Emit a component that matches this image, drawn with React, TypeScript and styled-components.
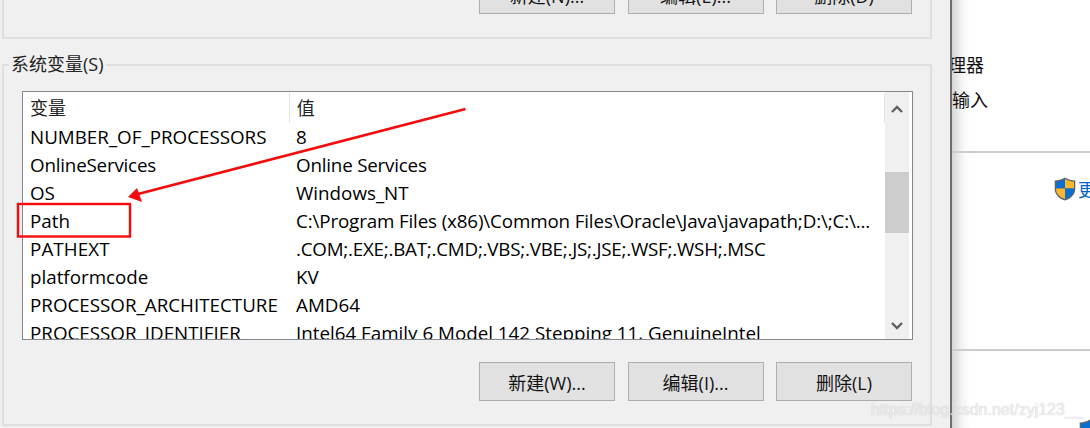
import { FC } from 'react';
import styled, { createGlobalStyle } from 'styled-components';

const GlobalStyle = createGlobalStyle`
  html, body {
    margin: 0;
    width: 1090px;
    height: 428px;
    overflow: hidden;
    background: #fff;
    font-family: "Open Sans", "Noto Sans CJK SC", sans-serif;
    font-size: 18.8px;
    color: #000;
  }
`;

const Screen = styled.div`
  position: relative;
  display: flex;
  width: 1090px;
  height: 428px;
  overflow: hidden;
`;

const Dialog = styled.div`
  width: 952px;
  flex: none;
  box-sizing: border-box;
  height: 428px;
  background: #f0f0f0;
  border-right: 2px solid #6f6f6f;
  padding-left: 2px;
`;

const GroupTop = styled.div`
  display: flow-root;
  width: 930px;
  height: 39px;
  box-sizing: border-box;
  border: 2px solid #dfdfdf;
  border-top: none;
  padding-right: 18px;
`;

const GroupBottom = styled.div`
  width: 930px;
  height: 362px;
  margin-top: 25px;
  box-sizing: border-box;
  border: 2px solid #dfdfdf;
  padding: 0 18px;
`;

const GroupTitle = styled.div`
  width: max-content;
  height: 26px;
  margin: -15px 0 0 -13px;
  padding: 0 2px;
  background: #f0f0f0;
  font-size: 18px;
  line-height: 26px;
  color: #222;
`;

const ButtonRow = styled.div<{ $top?: boolean }>`
  display: flex;
  justify-content: flex-end;
  gap: 12.5px;
  margin-top: ${({ $top }) => ($top ? '-25px' : '22px')};
`;

const Button = styled.div`
  width: 136px;
  height: 39px;
  box-sizing: border-box;
  display: flex;
  align-items: center;
  justify-content: center;
  background: #e1e1e1;
  border: 1px solid #adadad;
  font-size: 18px;
  color: #111;
`;

const ListView = styled.div`
  display: flex;
  width: 891px;
  height: 249px;
  margin-top: 14px;
  box-sizing: border-box;
  background: #fff;
  border: 1px solid #828790;
  overflow: hidden;
`;

const ListBody = styled.div`
  flex: 1;
  min-width: 0;
`;

const HeaderRow = styled.div`
  display: flex;
  height: 31px;
  align-items: center;
`;

const HeaderCell = styled.div<{ $first?: boolean }>`
  box-sizing: border-box;
  width: ${({ $first }) => ($first ? '267px' : '596px')};
  height: 30px;
  line-height: 30px;
  padding-left: 7px;
  border-right: 1px solid #e5e5e5;
  font-size: 18px;
  color: #222;
`;

const Row = styled.div`
  display: flex;
  height: 28px;
  line-height: 28px;
`;

const NameCell = styled.div<{ $spacing: number }>`
  width: 267px;
  flex: none;
  box-sizing: border-box;
  padding-left: 7px;
  white-space: nowrap;
  letter-spacing: ${({ $spacing }) => $spacing}px;
`;

const ValueCell = styled.div<{ $spacing: number }>`
  width: 590px;
  flex: none;
  box-sizing: border-box;
  padding-left: 6px;
  white-space: nowrap;
  letter-spacing: ${({ $spacing }) => $spacing}px;
`;

const ScrollTrack = styled.div`
  width: 24px;
  flex: none;
  margin-right: 3px;
  display: flex;
  flex-direction: column;
  background: #f0f0f0;
`;

const ScrollArrow = styled.div<{ $down?: boolean }>`
  height: 31px;
  box-sizing: border-box;
  flex: none;
  display: flex;
  align-items: center;
  justify-content: center;
  padding-top: ${({ $down }) => ($down ? '5px' : '2px')};
`;

const ScrollGap = styled.div<{ $size: number }>`
  height: ${({ $size }) => $size}px;
  flex: none;
`;

const ScrollThumb = styled.div`
  height: 61px;
  flex: none;
  background: #cdcdcd;
`;

const RightPanel = styled.div`
  flex: 1;
  min-width: 0;
  overflow: hidden;
  background: linear-gradient(to right, #d6d6d6 0, #f4f4f4 10px, #fff 18px);
`;

const PanelSection = styled.div<{ $height: number }>`
  display: flow-root;
  height: ${({ $height }) => $height}px;
  box-sizing: border-box;
  border-bottom: 2px solid #cccccc;
`;

const PanelText = styled.div<{ $shift: number; $top: number }>`
  margin-top: ${({ $top }) => $top}px;
  margin-left: ${({ $shift }) => $shift}px;
  height: 26px;
  line-height: 26px;
  font-size: 18px;
  white-space: nowrap;
  color: #111;
`;

const SecurityRow = styled.div<{ $top: number; $left: number }>`
  display: flex;
  align-items: center;
  gap: 2px;
  padding-top: ${({ $top }) => $top}px;
  padding-left: ${({ $left }) => $left}px;
  width: 260px;
  font-size: 18px;
  color: #0066cc;
  white-space: nowrap;
`;

const ArrowOverlay = styled.svg`
  position: absolute;
  left: 0;
  top: 0;
  pointer-events: none;
`;

const Watermark = styled.div`
  position: absolute;
  left: 871px;
  top: 398px;
  font-family: "Liberation Sans", sans-serif;
  font-size: 16px;
  line-height: 24px;
  color: rgba(255, 255, 255, 0.75);
  text-shadow: 0 0 1px rgba(120, 120, 120, 0.55);
  white-space: nowrap;
`;

interface IVariable {
  name: string,
  value: string,
  nameSpacing?: number,
  valueSpacing?: number,
}

const rows: IVariable[] = [
  { name: 'NUMBER_OF_PROCESSORS', value: '8' },
  { name: 'OnlineServices', value: 'Online Services', nameSpacing: -0.2, valueSpacing: -0.2 },
  { name: 'OS', value: 'Windows_NT' },
  { name: 'Path', value: 'C:\\Program Files (x86)\\Common Files\\Oracle\\Java\\javapath;D:\\;C:\\...', valueSpacing: -0.14 },
  { name: 'PATHEXT', value: '.COM;.EXE;.BAT;.CMD;.VBS;.VBE;.JS;.JSE;.WSF;.WSH;.MSC', nameSpacing: 0.1, valueSpacing: -0.23 },
  { name: 'platformcode', value: 'KV' },
  { name: 'PROCESSOR_ARCHITECTURE', value: 'AMD64' },
  { name: 'PROCESSOR_IDENTIFIER', value: 'Intel64 Family 6 Model 142 Stepping 11, GenuineIntel' },
];

const Chevron: FC<{ down?: boolean }> = ({ down }) => (
  <svg width="12" height="10" viewBox="0 0 12 10">
    <path
      d={down ? 'M1 2 L6 7 L11 2' : 'M1 8 L6 3 L11 8'}
      fill="none"
      stroke="#606060"
      strokeWidth="2.4"
    />
  </svg>
);

const Shield: FC = () => (
  <svg width="22" height="24" viewBox="0 0 22 24" style={{ flex: 'none' }}>
    <path d="M11 0.5 C8 2.5 4 3.4 0.7 3.6 V12 C0.7 17.5 5 21.5 11 23.5 C17 21.5 21.3 17.5 21.3 12 V3.6 C18 3.4 14 2.5 11 0.5 Z" fill="#5f6468" />
    <path d="M11 2 C8.5 3.6 5 4.5 2 4.7 V11.5 H11 Z" fill="#0a6fd0" />
    <path d="M11 2 C13.5 3.6 17 4.5 20 4.7 V11.5 H11 Z" fill="#fbb62e" />
    <path d="M2 11.5 H11 V22 C6 20.2 2 17 2 12 Z" fill="#fbb62e" />
    <path d="M20 11.5 H11 V22 C16 20.2 20 17 20 12 Z" fill="#0a6fd0" />
  </svg>
);

const App: FC = () => (
  <>
    <GlobalStyle />
    <Screen>
      <Dialog>
        <GroupTop>
          <ButtonRow $top>
            <Button>新建(N)...</Button>
            <Button>编辑(E)...</Button>
            <Button>删除(D)</Button>
          </ButtonRow>
        </GroupTop>
        <GroupBottom>
          <GroupTitle>系统变量(S)</GroupTitle>
          <ListView>
            <ListBody>
              <HeaderRow>
                <HeaderCell $first>变量</HeaderCell>
                <HeaderCell>值</HeaderCell>
              </HeaderRow>
              {rows.map(({ name, value, nameSpacing = 0, valueSpacing = 0 }) => (
                <Row key={name}>
                  <NameCell $spacing={nameSpacing}>{name}</NameCell>
                  <ValueCell $spacing={valueSpacing}>{value}</ValueCell>
                </Row>
              ))}
            </ListBody>
            <ScrollTrack>
              <ScrollArrow><Chevron /></ScrollArrow>
              <ScrollGap $size={49} />
              <ScrollThumb />
              <ScrollGap $size={75} />
              <ScrollArrow $down><Chevron down /></ScrollArrow>
            </ScrollTrack>
          </ListView>
          <ButtonRow>
            <Button>新建(W)...</Button>
            <Button>编辑(I)...</Button>
            <Button>删除(L)</Button>
          </ButtonRow>
        </GroupBottom>
      </Dialog>
      <RightPanel>
        <PanelSection $height={153}>
          <PanelText $shift={-4} $top={52}>理器</PanelText>
          <PanelText $shift={0} $top={9}>输入</PanelText>
        </PanelSection>
        <PanelSection $height={198}>
          <SecurityRow $top={23} $left={102}>
            <Shield />
            更改设置
          </SecurityRow>
        </PanelSection>
        <SecurityRow $top={68} $left={127}>
          <Shield />
        </SecurityRow>
      </RightPanel>
      <ArrowOverlay width="1090" height="428" viewBox="0 0 1090 428">
        <line x1="465.5" y1="109" x2="138" y2="194" stroke="#f40c0c" strokeWidth="2.6" />
        <path d="M128 197 L137 188 L142 202 Z" fill="#f40c0c" />
        <rect x="18" y="204" width="112" height="32.5" fill="none" stroke="#f40c0c" strokeWidth="2.4" />
      </ArrowOverlay>
      <Watermark>https://blog.csdn.net/zyj123__</Watermark>
    </Screen>
  </>
);

export default App;
